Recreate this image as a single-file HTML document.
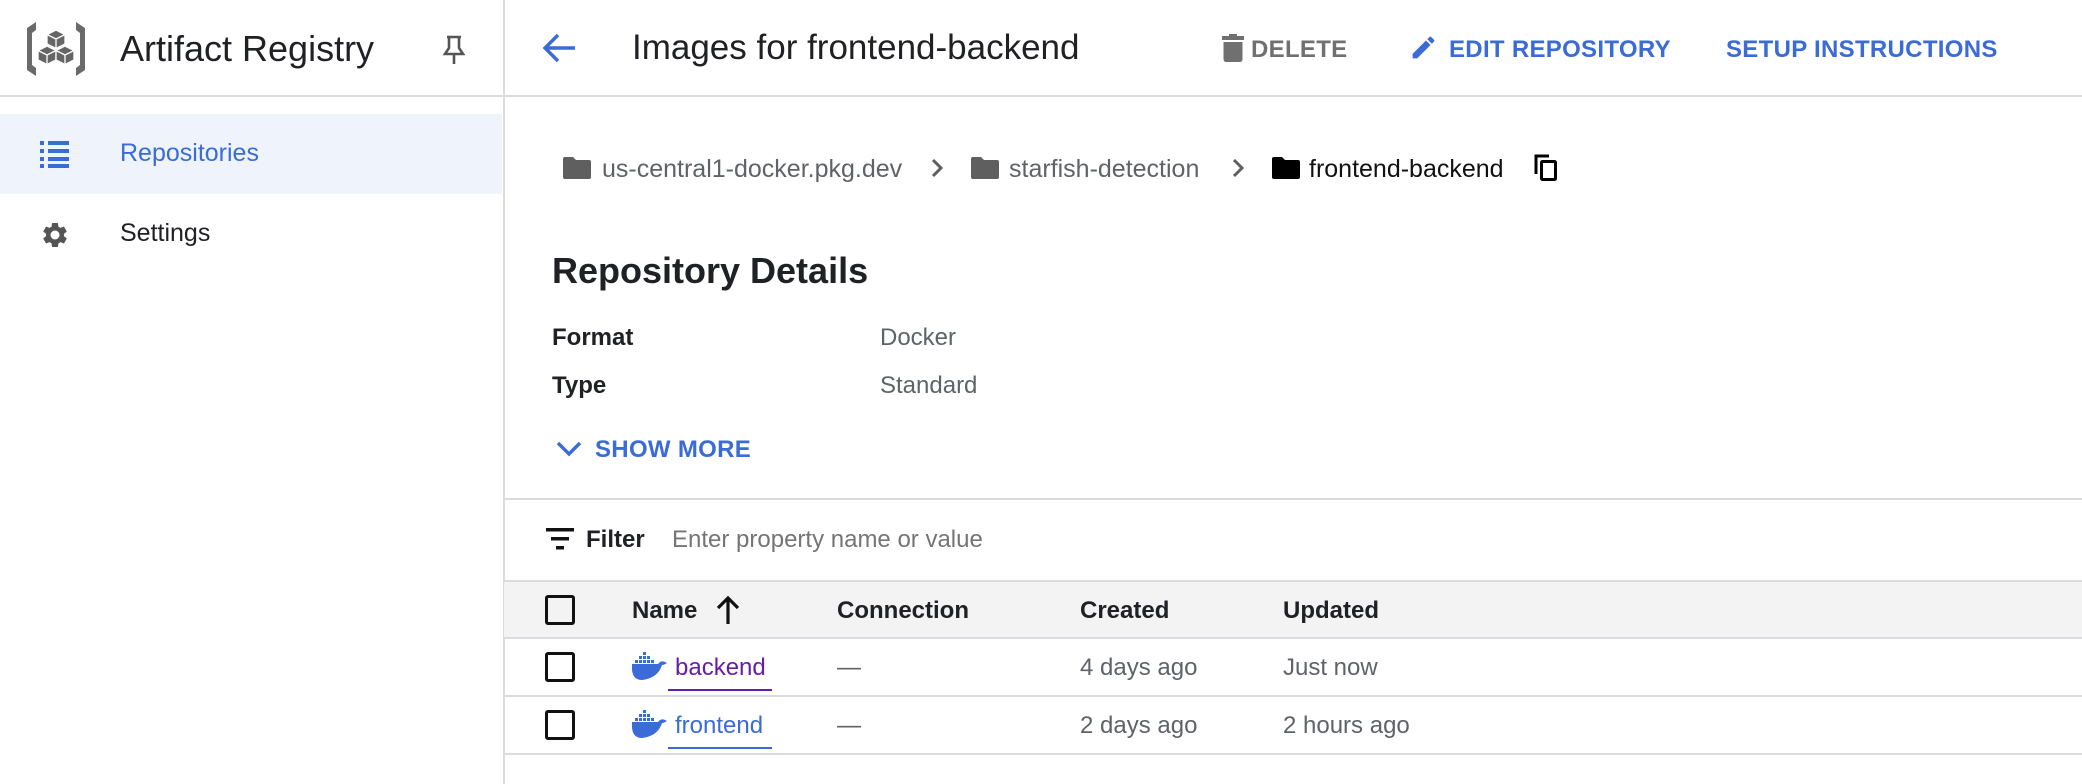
<!DOCTYPE html>
<html><head><meta charset="utf-8"><style>
*{margin:0;padding:0;box-sizing:border-box}
body{width:2082px;height:784px;background:#fff;font-family:"Liberation Sans",Roboto,sans-serif;color:#202124;position:relative;overflow:hidden}
.a{position:absolute;white-space:nowrap}
.blue{color:#3a6bd6}
.btn{font-size:24px;font-weight:bold;letter-spacing:0.3px}
.t24{font-size:24px}
.hl{position:absolute;background:#dadce0;height:2px}
svg{position:absolute}
.cb{position:absolute;width:30px;height:30px;border:3.5px solid #111;border-radius:3px}
</style></head><body>
<!-- sidebar -->
<div class="a" style="left:503px;top:0;width:2px;height:784px;background:#dadce0"></div>
<div class="hl" style="left:0;top:95px;width:2082px"></div>
<svg style="left:24px;top:20px" width="64" height="58" viewBox="0 0 64 58">
<path d="M12 2 L3 8 V50 L12 56 V48 L8 45 V13 L12 10Z" fill="#6b6b6b"/>
<path d="M52 2 L61 8 V50 L52 56 V48 L56 45 V13 L52 10Z" fill="#6b6b6b"/>
<g stroke="#fff" stroke-width="1.3" fill="#666">
<path d="M32 10 L41 14.5 V24 L32 28.5 L23 24 V14.5Z"/><path d="M23 14.5 L32 19 L41 14.5 M32 19 V28.5" fill="none"/>
<path d="M23 26 L32 30.5 V40 L23 44.5 L14 40 V30.5Z"/><path d="M14 30.5 L23 35 L32 30.5 M23 35 V44.5" fill="none"/>
<path d="M41 26 L50 30.5 V40 L41 44.5 L32 40 V30.5Z"/><path d="M32 30.5 L41 35 L50 30.5 M41 35 V44.5" fill="none"/>
</g>
</svg>
<div class="a" style="left:120px;top:28px;font-size:36px">Artifact Registry</div>
<svg style="left:440px;top:34px" width="28" height="32" viewBox="0 0 28 32"><path d="M7 3 H21 M9 3 V14 L5 20 H23 L19 14 V3 M14 20 V30" fill="none" stroke="#555" stroke-width="2.6"/></svg>
<div class="a" style="left:0;top:114px;width:502px;height:80px;background:#eef3fc"></div>
<svg style="left:40px;top:140px" width="30" height="28" viewBox="0 0 30 28"><g fill="#3a6bd6"><rect x="0" y="1" width="4" height="4"/><rect x="8" y="1" width="21" height="4"/><rect x="0" y="9" width="4" height="4"/><rect x="8" y="9" width="21" height="4"/><rect x="0" y="17" width="4" height="4"/><rect x="8" y="17" width="21" height="4"/><rect x="0" y="24" width="4" height="4"/><rect x="8" y="24" width="21" height="4"/></g></svg>
<div class="a blue" style="left:120px;top:139px;font-size:25px">Repositories</div>
<svg style="left:40px;top:220px" width="30" height="30" viewBox="0 0 24 24"><path fill="#555" d="M19.14 12.94c.04-.3.06-.61.06-.94 0-.32-.02-.64-.07-.94l2.03-1.58a.49.49 0 0 0 .12-.61l-1.92-3.32a.49.49 0 0 0-.59-.22l-2.39.96c-.5-.38-1.03-.7-1.620-.94l-.36-2.54a.48.48 0 0 0-.48-.41h-3.84c-.24 0-.43.17-.47.41l-.36 2.54c-.59.24-1.13.57-1.62.94l-2.39-.96a.49.49 0 0 0-.59.22L2.74 8.87c-.12.21-.08.47.12.61l2.03 1.58c-.05.3-.09.63-.09.94s.02.64.07.94l-2.03 1.58a.49.49 0 0 0-.12.61l1.92 3.32c.12.22.37.29.59.22l2.39-.96c.5.38 1.03.7 1.62.94l.36 2.54c.05.24.24.41.48.41h3.84c.24 0 .44-.17.47-.41l.36-2.54c.59-.24 1.13-.56 1.62-.94l2.39.96c.22.08.47 0 .59-.22l1.920-3.32c.12-.22.07-.47-.12-.61l-2.01-1.58zM12 15.6A3.6 3.6 0 1 1 12 8.4a3.6 3.6 0 0 1 0 7.2z"/></svg>
<div class="a" style="left:120px;top:219px;font-size:25px">Settings</div>
<!-- header -->
<svg style="left:541px;top:32px" width="36" height="32" viewBox="0 0 36 32"><path d="M34 16 H4 M17 3 L4 16 L17 29" fill="none" stroke="#3a6bd6" stroke-width="3.4"/></svg>
<div class="a" style="left:632px;top:28px;font-size:35px">Images for frontend-backend</div>
<svg style="left:1222px;top:34px" width="22" height="28" viewBox="0 0 22 28"><path fill="#707070" d="M7 0 H15 V2 H22 V6 H0 V2 H7Z M1.5 8 H20.5 V25 Q20.5 28 17.5 28 H4.5 Q1.5 28 1.5 25Z"/></svg>
<div class="a btn" style="left:1251px;top:36px;color:#707070">DELETE</div>
<svg style="left:1409px;top:33px" width="29" height="29" viewBox="0 0 24 24"><path fill="#3a6bd6" d="M3 17.25V21h3.75L17.81 9.94l-3.75-3.75L3 17.25zM20.71 7.04a1 1 0 0 0 0-1.41l-2.34-2.34a1 1 0 0 0-1.41 0l-1.83 1.83 3.75 3.75 1.83-1.83z"/></svg>
<div class="a btn blue" style="left:1449px;top:36px">EDIT REPOSITORY</div>
<div class="a btn blue" style="left:1726px;top:36px">SETUP INSTRUCTIONS</div>
<!-- breadcrumb -->
<svg style="left:563px;top:156px" width="28" height="24" viewBox="0 0 28 24"><path fill="#5f5f5f" d="M0 3 Q0 1 2 1 H10 L13 4 H26 Q28 4 28 6 V21 Q28 23 26 23 H2 Q0 23 0 21Z"/></svg>
<div class="a" style="left:602px;top:155px;font-size:25px;color:#5f6368">us-central1-docker.pkg.dev</div>
<svg style="left:930px;top:158px" width="14" height="20" viewBox="0 0 14 20"><path d="M3 2 L11 10 L3 18" fill="none" stroke="#5f5f5f" stroke-width="3"/></svg>
<svg style="left:971px;top:156px" width="28" height="24" viewBox="0 0 28 24"><path fill="#5f5f5f" d="M0 3 Q0 1 2 1 H10 L13 4 H26 Q28 4 28 6 V21 Q28 23 26 23 H2 Q0 23 0 21Z"/></svg>
<div class="a" style="left:1009px;top:155px;font-size:25px;color:#5f6368">starfish-detection</div>
<svg style="left:1231px;top:158px" width="14" height="20" viewBox="0 0 14 20"><path d="M3 2 L11 10 L3 18" fill="none" stroke="#5f5f5f" stroke-width="3"/></svg>
<svg style="left:1272px;top:156px" width="28" height="24" viewBox="0 0 28 24"><path fill="#000" d="M0 3 Q0 1 2 1 H10 L13 4 H26 Q28 4 28 6 V21 Q28 23 26 23 H2 Q0 23 0 21Z"/></svg>
<div class="a" style="left:1309px;top:155px;font-size:25px;color:#111">frontend-backend</div>
<svg style="left:1534px;top:154px" width="24" height="28" viewBox="0 0 24 28"><path d="M2 20 V2 H15" fill="none" stroke="#000" stroke-width="3"/><rect x="7.5" y="7.5" width="14" height="18" fill="none" stroke="#000" stroke-width="3" rx="1"/></svg>
<!-- details -->
<div class="a" style="left:552px;top:250px;font-size:36px;font-weight:bold;color:#202124">Repository Details</div>
<div class="a t24" style="left:552px;top:324px;font-weight:bold">Format</div>
<div class="a t24" style="left:880px;top:324px;color:#5f6368">Docker</div>
<div class="a t24" style="left:552px;top:372px;font-weight:bold">Type</div>
<div class="a t24" style="left:880px;top:372px;color:#5f6368">Standard</div>
<svg style="left:555px;top:440px" width="28" height="18" viewBox="0 0 28 18"><path d="M3 3 L14 14 L25 3" fill="none" stroke="#3a6bd6" stroke-width="3.4"/></svg>
<div class="a btn blue" style="left:595px;top:436px">SHOW MORE</div>
<div class="hl" style="left:504px;top:498px;width:1578px"></div>
<!-- filter -->
<svg style="left:546px;top:528px" width="28" height="22" viewBox="0 0 28 22"><rect x="0" y="0" width="28" height="3.5" fill="#111"/><rect x="5" y="9" width="18" height="3.5" fill="#111"/><rect x="10" y="18" width="8" height="3.5" fill="#111"/></svg>
<div class="a t24" style="left:586px;top:526px;font-weight:bold">Filter</div>
<div class="a t24" style="left:672px;top:526px;color:#757575">Enter property name or value</div>
<!-- table -->
<div class="a" style="left:504px;top:580px;width:1578px;height:59px;background:#f3f3f3;border-top:2px solid #dadce0;border-bottom:2px solid #dadce0"></div>
<div class="cb" style="left:545px;top:595px"></div>
<div class="a t24" style="left:632px;top:597px;font-weight:bold">Name</div>
<svg style="left:716px;top:595px" width="24" height="30" viewBox="0 0 24 30"><path d="M12 29 V4 M2 13 L12 3 L22 13" fill="none" stroke="#111" stroke-width="3.2"/></svg>
<div class="a t24" style="left:837px;top:597px;font-weight:bold">Connection</div>
<div class="a t24" style="left:1080px;top:597px;font-weight:bold">Created</div>
<div class="a t24" style="left:1283px;top:597px;font-weight:bold">Updated</div>
<div class="cb" style="left:545px;top:652px"></div>
<svg style="left:632px;top:652px" width="36" height="30" viewBox="0 0 36 30"><g fill="#3a6bd6"><rect x="11" y="0" width="3" height="3"/><rect x="7" y="4" width="3" height="3"/><rect x="11" y="4" width="3" height="3"/><rect x="15" y="4" width="3" height="3"/><rect x="3" y="8" width="3" height="3"/><rect x="7" y="8" width="3" height="3"/><rect x="11" y="8" width="3" height="3"/><rect x="15" y="8" width="3" height="3"/><rect x="19" y="8" width="3" height="3"/><path d="M0 12 H26 Q29 8 33 10 L35 11 Q32 13 30 13 Q26 26 10 28 Q1 28 0 18Z"/></g></svg>
<div class="a t24" style="left:675px;top:654px;color:#681da8">backend</div>
<div class="a" style="left:668px;top:689px;width:104px;height:2px;background:#681da8"></div>
<div class="a t24" style="left:837px;top:654px;color:#5f6368">—</div>
<div class="a t24" style="left:1080px;top:654px;color:#5f6368">4 days ago</div>
<div class="a t24" style="left:1283px;top:654px;color:#5f6368">Just now</div>
<div class="hl" style="left:504px;top:695px;width:1578px"></div>
<div class="cb" style="left:545px;top:710px"></div>
<svg style="left:632px;top:710px" width="36" height="30" viewBox="0 0 36 30"><g fill="#3a6bd6"><rect x="11" y="0" width="3" height="3"/><rect x="7" y="4" width="3" height="3"/><rect x="11" y="4" width="3" height="3"/><rect x="15" y="4" width="3" height="3"/><rect x="3" y="8" width="3" height="3"/><rect x="7" y="8" width="3" height="3"/><rect x="11" y="8" width="3" height="3"/><rect x="15" y="8" width="3" height="3"/><rect x="19" y="8" width="3" height="3"/><path d="M0 12 H26 Q29 8 33 10 L35 11 Q32 13 30 13 Q26 26 10 28 Q1 28 0 18Z"/></g></svg>
<div class="a t24 blue" style="left:675px;top:712px">frontend</div>
<div class="a" style="left:668px;top:747px;width:104px;height:2px;background:#3a6bd6"></div>
<div class="a t24" style="left:837px;top:712px;color:#5f6368">—</div>
<div class="a t24" style="left:1080px;top:712px;color:#5f6368">2 days ago</div>
<div class="a t24" style="left:1283px;top:712px;color:#5f6368">2 hours ago</div>
<div class="hl" style="left:504px;top:753px;width:1578px"></div>
</body></html>
